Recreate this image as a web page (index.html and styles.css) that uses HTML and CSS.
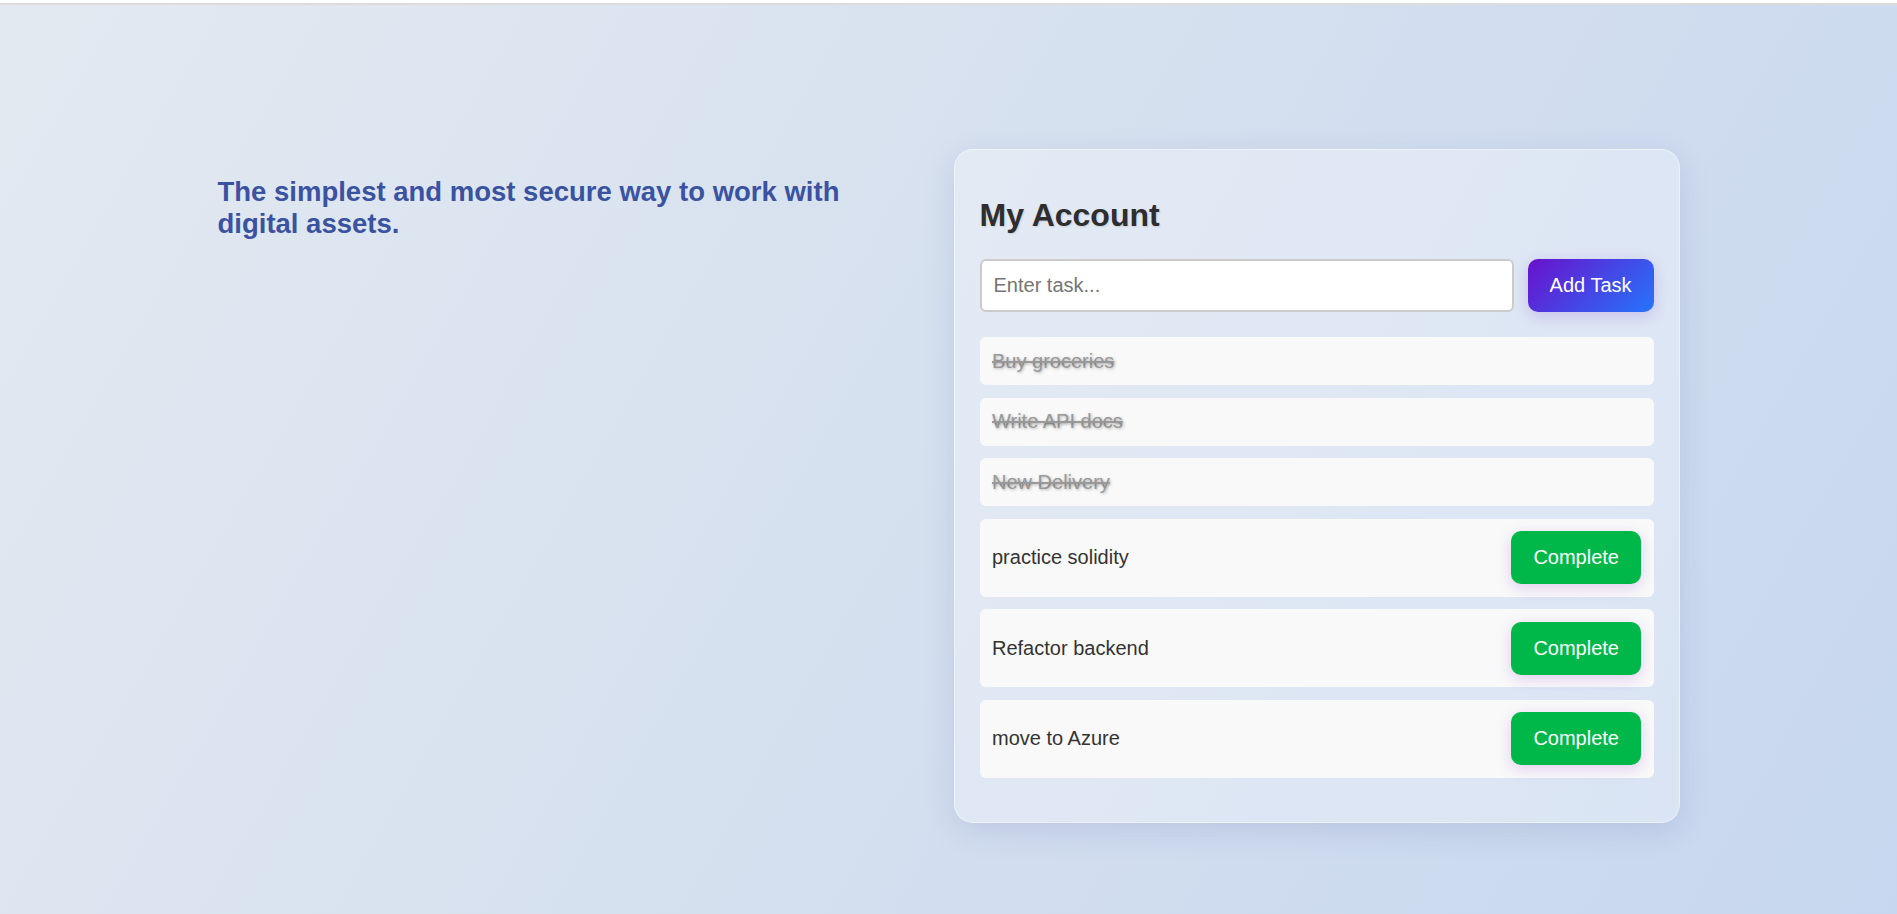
FILE: index.html
```html
<!DOCTYPE html>
<html lang="en">
<head>
<meta charset="utf-8">
<title>My Account</title>
<link rel="stylesheet" href="styles.css">
</head>
<body>
<div class="topline"></div>
<main class="page">
  <section class="hero">
    <h1 class="tagline">The simplest and most secure way to work with digital assets.</h1>
  </section>
  <section class="card">
    <h2 class="card-title">My Account</h2>
    <div class="task-form">
      <input class="task-input" type="text" placeholder="Enter task...">
      <button class="btn btn-add">Add Task</button>
    </div>
    <ul class="task-list">
      <li class="task task-done"><span>Buy groceries</span></li>
      <li class="task task-done"><span>Write API docs</span></li>
      <li class="task task-done"><span>New Delivery</span></li>
      <li class="task"><span>practice solidity</span><button class="btn btn-complete">Complete</button></li>
      <li class="task"><span>Refactor backend</span><button class="btn btn-complete">Complete</button></li>
      <li class="task"><span>move to Azure</span><button class="btn btn-complete">Complete</button></li>
    </ul>
  </section>
</main>
</body>
</html>
```
FILE: styles.css
```css
* { box-sizing: border-box; }

html, body {
  margin: 0;
  padding: 0;
}

body {
  min-height: 914px;
  font-family: "Liberation Sans", Arial, sans-serif;
  background: linear-gradient(120deg, #e3e9f1 0%, #d5e0ef 50%, #c7d7ef 100%);
  color: #333;
}

.topline {
  height: 5px;
  background: #fff;
  border-bottom: 2px solid #dcdcdc;
}

.page {
  max-width: 1462px;
  margin: 0 auto;
  padding-top: 144px;
  display: flex;
  justify-content: space-between;
  align-items: flex-start;
}

.hero {
  width: 660px;
}

.tagline {
  margin: 27px 0 0;
  font-size: 27.5px;
  font-weight: 700;
  line-height: normal;
  color: #3a53a0;
}

.card {
  width: 726px;
  padding: 25px;
  border: 1.25px solid rgba(255, 255, 255, 0.45);
  border-radius: 19px;
  background: rgba(255, 255, 255, 0.3);
  box-shadow: 0 8px 32px rgba(31, 38, 135, 0.12);
}

.card-title {
  margin: 22px 0 25px;
  font-size: 32px;
  font-weight: 700;
  line-height: normal;
  color: #2e2e2e;
  text-shadow: 1px 1px 2px rgba(0, 0, 0, 0.12);
}

.task-form {
  display: flex;
  gap: 14px;
}

.task-input {
  flex: 1;
  min-width: 0;
  padding: 13px 12px;
  font-family: "Liberation Sans", Arial, sans-serif;
  font-size: 20px;
  line-height: normal;
  color: #333;
  background: #fff;
  border: 2px solid #cbcbcb;
  border-radius: 6px;
  outline: none;
}

.task-input::placeholder {
  color: #757575;
}

.btn {
  border: none;
  border-radius: 10px;
  font-family: "Liberation Sans", Arial, sans-serif;
  font-size: 20px;
  line-height: normal;
  color: #fff;
  cursor: pointer;
  box-shadow: 0 4px 15px rgba(106, 17, 203, 0.18);
}

.btn-add {
  padding: 0 22px;
  background: linear-gradient(135deg, #6a11cb 0%, #2575fc 100%);
}

.task-list {
  list-style: none;
  margin: 25px 0 19px;
  padding: 0;
  display: flex;
  flex-direction: column;
  gap: 12.5px;
}

.task {
  display: flex;
  align-items: center;
  justify-content: space-between;
  padding: 12.5px 12.5px;
  background: #f9f9f9;
  border-radius: 6px;
  font-size: 20px;
  line-height: normal;
  color: #333;
}

.task-done span {
  color: #999;
  text-decoration: line-through;
  text-shadow: 1px 1px 3px rgba(0, 0, 0, 0.28);
}

.btn-complete {
  padding: 15px 22px;
  background: #00b74a;
}
```
